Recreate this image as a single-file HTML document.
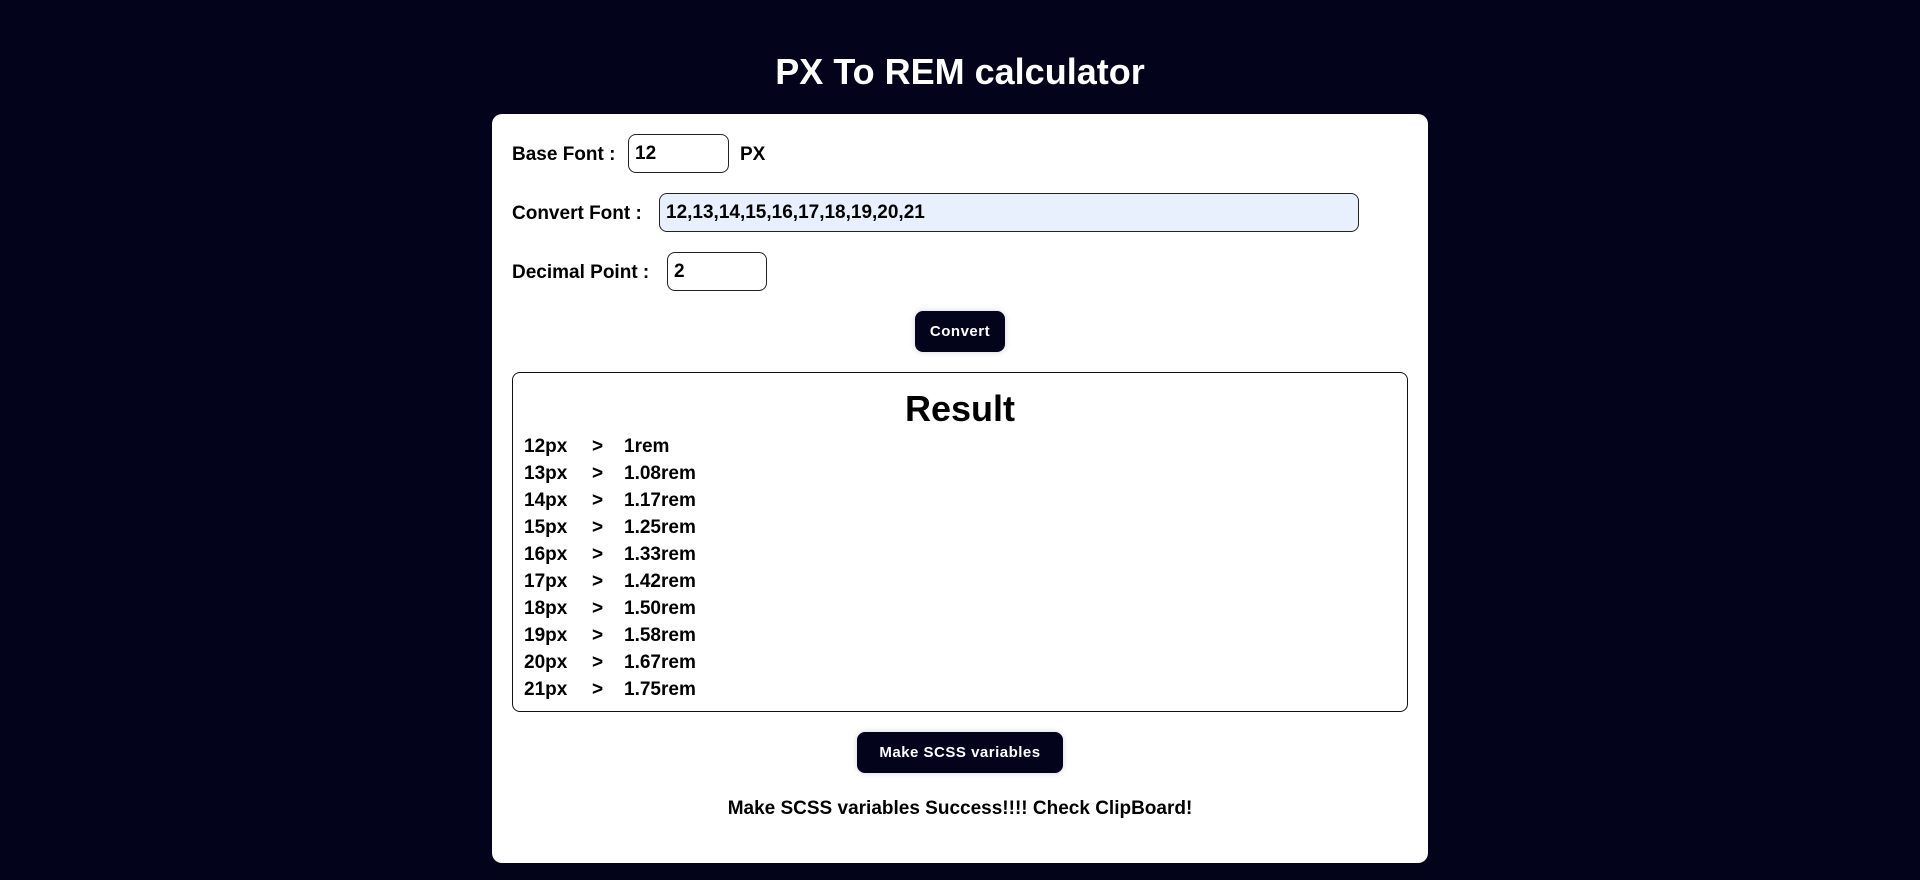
<!DOCTYPE html>
<html><head><meta charset="utf-8"><style>
*{box-sizing:border-box;margin:0;padding:0}
body{width:1920px;height:880px;background:#03031c;font-family:"Liberation Sans","Noto Sans CJK KR",sans-serif;font-weight:bold;color:#000;position:relative;overflow:hidden}
.a{position:absolute}
h1{position:absolute;left:0;width:1920px;top:50px;text-align:center;color:#fff;font-size:36px;line-height:44px}
.card{left:492px;top:114px;width:936px;height:749px;background:#fff;border-radius:10px}
.lbl{font-size:19px;line-height:22px}
.inp{border:1px solid #222;border-radius:8px;background:#fff;font-size:19px;line-height:38px;padding-left:6px}
.btn{background:#03031c;color:#fff;border-radius:8px;font-size:15px;text-align:center;letter-spacing:0.5px;box-shadow:0 0 6px rgba(80,80,120,.25)}
.res{left:512px;top:372px;width:896px;height:340px;border:1px solid #111;border-radius:8px}
.row{font-size:19px;line-height:22px;left:524px}
</style></head><body>
<h1>PX To REM calculator</h1>
<div class="a card"></div>
<div class="a lbl" style="left:512px;top:144px">Base Font :</div>
<div class="a inp" style="left:628px;top:134px;width:101px;height:39px">12</div>
<div class="a lbl" style="left:740px;top:144px">PX</div>
<div class="a lbl" style="left:512px;top:203px">Convert Font :</div>
<div class="a inp" style="left:659px;top:193px;width:700px;height:39px;background:#e8f0fe">12,13,14,15,16,17,18,19,20,21</div>
<div class="a lbl" style="left:512px;top:262px">Decimal Point :</div>
<div class="a inp" style="left:667px;top:252px;width:100px;height:39px">2</div>
<div class="a btn" style="left:915px;top:311px;width:90px;height:41px;line-height:41px">Convert</div>
<div class="a res"></div>
<div class="a" style="left:512px;width:896px;top:388px;text-align:center;font-size:36px;line-height:42px">Result</div>
<div class="a row" style="top:436px">12px</div><div class="a row" style="left:592px;top:436px">&gt;</div><div class="a row" style="left:624px;top:436px">1rem</div>
<div class="a row" style="top:463px">13px</div><div class="a row" style="left:592px;top:463px">&gt;</div><div class="a row" style="left:624px;top:463px">1.08rem</div>
<div class="a row" style="top:490px">14px</div><div class="a row" style="left:592px;top:490px">&gt;</div><div class="a row" style="left:624px;top:490px">1.17rem</div>
<div class="a row" style="top:517px">15px</div><div class="a row" style="left:592px;top:517px">&gt;</div><div class="a row" style="left:624px;top:517px">1.25rem</div>
<div class="a row" style="top:544px">16px</div><div class="a row" style="left:592px;top:544px">&gt;</div><div class="a row" style="left:624px;top:544px">1.33rem</div>
<div class="a row" style="top:571px">17px</div><div class="a row" style="left:592px;top:571px">&gt;</div><div class="a row" style="left:624px;top:571px">1.42rem</div>
<div class="a row" style="top:598px">18px</div><div class="a row" style="left:592px;top:598px">&gt;</div><div class="a row" style="left:624px;top:598px">1.50rem</div>
<div class="a row" style="top:625px">19px</div><div class="a row" style="left:592px;top:625px">&gt;</div><div class="a row" style="left:624px;top:625px">1.58rem</div>
<div class="a row" style="top:652px">20px</div><div class="a row" style="left:592px;top:652px">&gt;</div><div class="a row" style="left:624px;top:652px">1.67rem</div>
<div class="a row" style="top:679px">21px</div><div class="a row" style="left:592px;top:679px">&gt;</div><div class="a row" style="left:624px;top:679px">1.75rem</div>
<div class="a btn" style="left:857px;top:732px;width:206px;height:41px;line-height:41px">Make SCSS variables</div>
<div class="a" style="left:492px;width:936px;top:798px;text-align:center;font-size:19px;line-height:22px">Make SCSS variables Success!!!! Check ClipBoard!</div>
</body></html>
